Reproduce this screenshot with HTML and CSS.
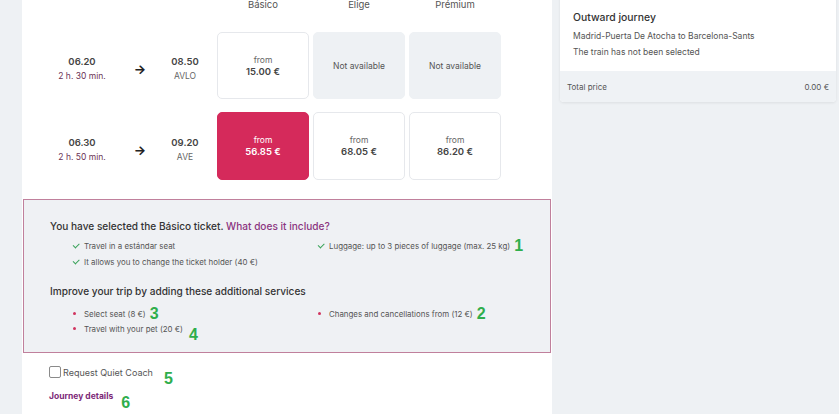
FILE: index.html
```html
<!DOCTYPE html>
<html lang="en">
<head>
<meta charset="utf-8">
<title>Train selection</title>
<link rel="stylesheet" href="styles.css">
</head>
<body>
<div class="page">
  <div class="gutter"></div>
  <main class="main">
    <div class="fares">
      <div class="hdr-blank"></div>
      <div class="hdr">Básico</div>
      <div class="hdr">Elige</div>
      <div class="hdr">Prémium</div>

      <div class="times">
        <div class="t-dep"><b>06.20</b><span class="dur">2 h. 30 min.</span></div>
        <div class="t-arrow">→</div>
        <div class="t-arr"><b>08.50</b><span class="kind">AVLO</span></div>
      </div>
      <div class="fare"><span class="from">from</span><b>15.00 €</b></div>
      <div class="fare na">Not available</div>
      <div class="fare na">Not available</div>

      <div class="times">
        <div class="t-dep"><b>06.30</b><span class="dur">2 h. 50 min.</span></div>
        <div class="t-arrow">→</div>
        <div class="t-arr"><b>09.20</b><span class="kind">AVE</span></div>
      </div>
      <div class="fare selected"><span class="from">from</span><b>56.85 €</b></div>
      <div class="fare"><span class="from">from</span><b>68.05 €</b></div>
      <div class="fare"><span class="from">from</span><b>86.20 €</b></div>
    </div>

    <section class="info">
      <h3 class="info-title">You have selected the Básico ticket. <span class="link">What does it include?</span></h3>
      <ul class="checks">
        <li><span class="ck"></span>Travel in a estándar seat</li>
        <li><span class="ck"></span>Luggage: up to 3 pieces of luggage (max. 25 kg)<span class="num n1">1</span></li>
        <li><span class="ck"></span>It allows you to change the ticket holder (40 €)</li>
      </ul>
      <h3 class="info-title second">Improve your trip by adding these additional services</h3>
      <ul class="extras">
        <li><span class="dot"></span>Select seat (8 €)<span class="num n3">3</span></li>
        <li><span class="dot"></span>Changes and cancellations from (12 €)<span class="num n2">2</span></li>
        <li><span class="dot"></span>Travel with your pet (20 €)<span class="num n4">4</span></li>
      </ul>
    </section>

    <label class="quiet"><span class="box"></span>Request Quiet Coach<span class="num n5">5</span></label>
    <div class="details">Journey details<span class="num n6">6</span></div>
  </main>

  <aside class="side">
    <div class="card">
      <div class="card-body">
        <div class="card-title">Outward journey</div>
        <div class="card-line">Madrid-Puerta De Atocha to Barcelona-Sants</div>
        <div class="card-line">The train has not been selected</div>
      </div>
      <div class="card-foot">
        <span>Total price</span>
        <span>0.00 €</span>
      </div>
    </div>
  </aside>
</div>
</body>
</html>
```

FILE: styles.css
```css
* { box-sizing: border-box; }
html, body { margin: 0; padding: 0; }
body {
  background: #eef1f4;
  font-family: Inter, "Noto Sans", Arial, sans-serif;
  color: #333;
  width: 839px;
  height: 414px;
  overflow: hidden;
}
.page {
  display: flex;
  height: 414px;
}
.gutter { width: 22px; flex: none; }
.main {
  width: 530px;
  flex: none;
  background: #fff;
  padding: 0 1px;
}
.fares {
  display: grid;
  grid-template-columns: 190px 92px 92px 92px;
  grid-template-rows: 12px 88px 81px;
  column-gap: 4px;
  margin-top: -1px;
}
.hdr {
  font-size: 9.5px;
  color: #555;
  text-align: center;
  line-height: 12px;
}
.fares > :nth-child(n+5):nth-child(-n+8) { margin-top: 21px; }
.fares > :nth-child(n+9) { margin-top: 13px; }

.times {
  display: flex;
  align-items: center;
  padding-left: 29px;
  padding-top: 7px;
}
.t-dep, .t-arr {
  display: flex;
  flex-direction: column;
  align-items: center;
  line-height: 14px;
}
.t-dep { width: 60px; }
.t-arrow { width: 56px; text-align: center; font-size: 13px; font-weight: 700; color: #222; }
.t-arr { width: 34px; }
.times b { font-size: 9.5px; font-weight: 600; color: #444; }
.dur { font-size: 8.5px; color: #6b3155; }
.kind { font-size: 8.5px; color: #666; }

.fare {
  border: 1px solid #e6e8ec;
  border-radius: 5px;
  background: #fff;
  display: flex;
  flex-direction: column;
  align-items: center;
  justify-content: center;
  line-height: 12px;
}
.fare .from { font-size: 8.5px; color: #666; }
.fare b { font-size: 9.5px; font-weight: 600; color: #444; }
.fare.na {
  background: #eef1f4;
  border-color: #eef1f4;
  font-size: 8.5px;
  color: #555;
}
.fare.selected {
  background: #d52a5b;
  border-color: #d52a5b;
}
.fare.selected .from, .fare.selected b { color: #fff; }

.info {
  margin-top: 19px;
  border: 1px solid #c0809c;
  background: #eff1f4;
  padding: 19px 10px 16px 26px;
  height: 154px;
}
.info-title {
  margin: 0;
  font-size: 10.1px;
  font-weight: 500;
  color: #333;
  line-height: 14px;
}
.info-title .link { color: #8b3580; }
.info-title.second { margin-top: 14px; }
.checks, .extras {
  list-style: none;
  margin: 5px 0 0;
  padding: 0 0 0 21px;
  display: grid;
  grid-template-columns: 245px 1fr;
  font-size: 7.9px;
  color: #555;
}
.checks li, .extras li {
  display: flex;
  align-items: center;
  height: 16px;
  white-space: nowrap;
}
.extras { margin-top: 8px; }
.extras li { height: 15px; }
.ck {
  display: inline-block;
  flex: none;
  width: 6px;
  height: 3.5px;
  border-left: 1.3px solid #3aa35a;
  border-bottom: 1.3px solid #3aa35a;
  transform: rotate(-45deg);
  margin: 0 5px 2px 2px;
}
.dot {
  display: inline-block;
  flex: none;
  width: 3px;
  height: 3px;
  border-radius: 50%;
  background: #d0345f;
  margin: 0 8px 0 2px;
}
.num {
  display: inline-block;
  color: #2fae4c;
  font-family: "Liberation Sans", Arial, sans-serif;
  font-weight: 700;
  font-size: 16px;
  line-height: 10px;
  margin-left: 4px;
}
.n4 { margin-left: 6px; transform: translateY(6px); }
.n5 { margin-left: 11px; transform: translateY(7px); }
.n6 { margin-left: 8px; transform: translateY(7px); }

.quiet {
  display: flex;
  align-items: center;
  margin: 13px 0 0 26px;
  font-size: 9px;
  color: #555;
  height: 12px;
}
.quiet .box {
  width: 12px;
  height: 12px;
  border: 1px solid #8a8a8a;
  border-radius: 2px;
  background: #fff;
  margin-right: 2px;
}
.details {
  margin: 13px 0 0 26px;
  font-size: 8.5px;
  font-weight: 700;
  color: #7d2a78;
  display: flex;
  align-items: center;
}

.side {
  width: 276px;
  flex: none;
  margin-left: 8px;
}
.card {
  margin-top: -10px;
  background: #fff;
  border-radius: 0 0 4px 4px;
  box-shadow: 0 1px 3px rgba(0,0,0,0.08);
  overflow: hidden;
}
.card-body { padding: 21px 13px 11px; }
.card-title { font-size: 10.4px; font-weight: 500; color: #333; line-height: 14px; margin-bottom: 3px; }
.card-line { font-size: 8.5px; color: #555; line-height: 16px; }
.card-foot {
  background: #eff2f5;
  display: flex;
  justify-content: space-between;
  padding: 0 7px;
  height: 31px;
  align-items: center;
  font-size: 8px;
  color: #555;
}
```
